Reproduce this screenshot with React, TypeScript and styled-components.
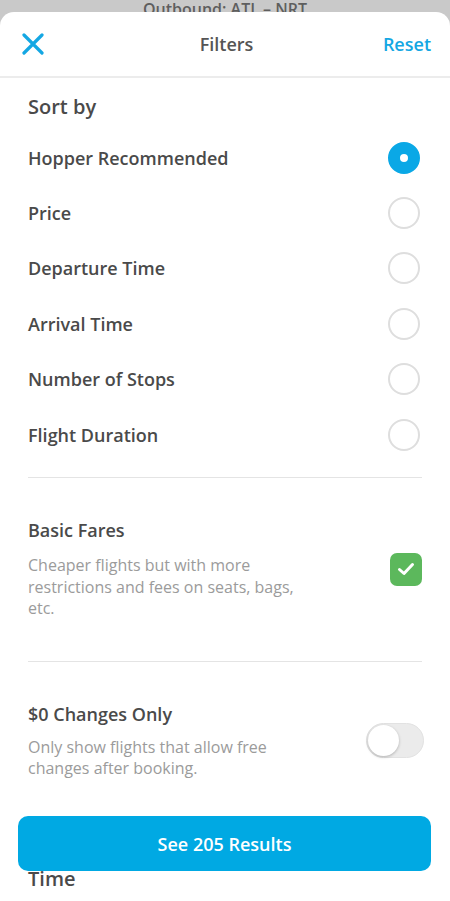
import React, { useState } from 'react';
import styled, { createGlobalStyle } from 'styled-components';

const GlobalStyle = createGlobalStyle`
  html, body {
    margin: 0;
    padding: 0;
    background: #c9c9c9;
  }
  body {
    font-family: 'Open Sans', 'Liberation Sans', sans-serif;
    -webkit-font-smoothing: antialiased;
  }
`;

const sortOptions = [
  'Hopper Recommended',
  'Price',
  'Departure Time',
  'Arrival Time',
  'Number of Stops',
  'Flight Duration',
];

export default function App() {
  const [sort, setSort] = useState('Hopper Recommended');
  const [basic, setBasic] = useState(true);
  const [freeChanges, setFreeChanges] = useState(false);

  return (
    <Page>
      <GlobalStyle />
      <BackBar>
        <BackTitle>Outbound: ATL – NRT</BackTitle>
      </BackBar>
      <Sheet>
        <Header>
          <CloseButton aria-label="Close">
            <svg width="22" height="22" viewBox="0 0 22 22">
              <path
                d="M2 2 L20 20 M20 2 L2 20"
                stroke="#14a7e3"
                strokeWidth="3.2"
                strokeLinecap="round"
              />
            </svg>
          </CloseButton>
          <HeaderTitle>Filters</HeaderTitle>
          <ResetButton>Reset</ResetButton>
        </Header>

        <Content>
          <SectionTitle>Sort by</SectionTitle>
          <OptionList>
            {sortOptions.map((option) => (
              <OptionRow key={option} onClick={() => setSort(option)}>
                <OptionLabel>{option}</OptionLabel>
                <Radio $checked={sort === option} />
              </OptionRow>
            ))}
          </OptionList>

          <Divider />

          <ToggleSection>
            <ToggleText $gap={13}>
              <ToggleTitle>Basic Fares</ToggleTitle>
              <ToggleDesc>
                Cheaper flights but with more restrictions and fees on seats, bags, etc.
              </ToggleDesc>
            </ToggleText>
            <Checkbox $checked={basic} onClick={() => setBasic(!basic)}>
              {basic && (
                <svg width="18" height="14" viewBox="0 0 18 14">
                  <path
                    d="M2.5 7.5 L7 11.5 L15.5 2.5"
                    fill="none"
                    stroke="#ffffff"
                    strokeWidth="3"
                    strokeLinecap="round"
                    strokeLinejoin="round"
                  />
                </svg>
              )}
            </Checkbox>
          </ToggleSection>

          <Divider />

          <ToggleSection>
            <ToggleText $gap={11}>
              <ToggleTitle>$0 Changes Only</ToggleTitle>
              <ToggleDesc>Only show flights that allow free changes after booking.</ToggleDesc>
            </ToggleText>
            <Switch $on={freeChanges} onClick={() => setFreeChanges(!freeChanges)}>
              <Knob />
            </Switch>
          </ToggleSection>

          <Divider />

          <NextTitle>Time</NextTitle>
        </Content>

        <ResultsButton>See 205 Results</ResultsButton>
      </Sheet>
    </Page>
  );
}

const Page = styled.div`
  width: 450px;
  height: 901px;
  display: flex;
  flex-direction: column;
  overflow: hidden;
  background: #c9c9c9;
`;

const BackBar = styled.div`
  flex-shrink: 0;
  height: 12px;
  display: flex;
  justify-content: center;
`;

const BackTitle = styled.div`
  margin-top: -1px;
  font-size: 16px;
  line-height: 20px;
  font-weight: 600;
  color: #5e5e5e;
  white-space: nowrap;
`;

const Sheet = styled.div`
  position: relative;
  z-index: 1;
  flex: 1;
  background: #ffffff;
  border-radius: 14px 14px 0 0;
  overflow: hidden;
`;

const Header = styled.header`
  height: 64px;
  display: grid;
  grid-template-columns: 1fr auto 1fr;
  align-items: center;
  padding: 0 19px 0 22px;
  border-bottom: 2px solid #ececec;
`;

const CloseButton = styled.div`
  display: flex;
  align-items: center;
  justify-self: start;
  width: 22px;
  height: 22px;
`;

const HeaderTitle = styled.h1`
  margin: 0;
  font-size: 18px;
  font-weight: 600;
  color: #555555;
`;

const ResetButton = styled.div`
  justify-self: end;
  font-size: 18px;
  font-weight: 600;
  color: #14a7e3;
`;

const Content = styled.main`
  padding: 15px 28px 0;
  display: flex;
  flex-direction: column;
`;

const SectionTitle = styled.h2`
  margin: 0;
  font-size: 20px;
  line-height: 28px;
  font-weight: 600;
  color: #4a4a4a;
`;

const OptionList = styled.div`
  margin-top: 9px;
  display: flex;
  flex-direction: column;
`;

const OptionRow = styled.div`
  height: 55.4px;
  display: flex;
  align-items: center;
  justify-content: space-between;
  padding-right: 2px;
`;

const OptionLabel = styled.span`
  font-size: 18px;
  font-weight: 600;
  color: #4a4a4a;
`;

const Radio = styled.span<{ $checked: boolean }>`
  box-sizing: border-box;
  width: 32px;
  height: 32px;
  border-radius: 50%;
  border: ${(p) => (p.$checked ? '12.5px solid #0aa8e6' : '2px solid #dedede')};
  background: #ffffff;
`;

const Divider = styled.hr`
  margin: 15px 0 0;
  border: none;
  border-top: 1.5px solid #e4e4e4;
  height: 0;
`;

const ToggleSection = styled.section`
  display: flex;
  align-items: center;
  justify-content: space-between;
  padding: 40px 0 26px;
`;

const ToggleText = styled.div<{ $gap: number }>`
  display: flex;
  flex-direction: column;
  gap: ${(p) => p.$gap}px;
`;

const ToggleTitle = styled.h3`
  margin: 0;
  font-size: 18px;
  line-height: 24px;
  font-weight: 600;
  color: #4a4a4a;
`;

const ToggleDesc = styled.p`
  margin: 0;
  max-width: 290px;
  font-size: 16px;
  line-height: 21.5px;
  color: #9b9b9b;
`;

const Checkbox = styled.div<{ $checked: boolean }>`
  width: 32px;
  height: 33px;
  border-radius: 7px;
  background: ${(p) => (p.$checked ? '#5cb85c' : '#ffffff')};
  border: ${(p) => (p.$checked ? 'none' : '2px solid #dedede')};
  display: flex;
  align-items: center;
  justify-content: center;
`;

const Switch = styled.div<{ $on: boolean }>`
  box-sizing: border-box;
  width: 58px;
  height: 35px;
  border-radius: 18px;
  background: ${(p) => (p.$on ? '#0aa8e6' : '#ebebeb')};
  border: 1px solid #e2e2e2;
  display: flex;
  align-items: center;
  justify-content: ${(p) => (p.$on ? 'flex-end' : 'flex-start')};
  padding: 0 1px;
  margin-right: -2px;
`;

const Knob = styled.span`
  width: 31px;
  height: 31px;
  border-radius: 50%;
  background: #ffffff;
  box-shadow: 0 1px 3px rgba(0, 0, 0, 0.25);
`;

const NextTitle = styled.h2`
  margin: 43px 0 0;
  font-size: 20px;
  line-height: 28px;
  font-weight: 600;
  color: #4a4a4a;
`;

const ResultsButton = styled.button`
  position: absolute;
  left: 18px;
  right: 19px;
  bottom: 30px;
  height: 55px;
  border: none;
  border-radius: 10px;
  background: #00a9e3;
  color: #ffffff;
  font-family: 'Open Sans', 'Liberation Sans', sans-serif;
  font-size: 18px;
  font-weight: 600;
  cursor: pointer;
`;
